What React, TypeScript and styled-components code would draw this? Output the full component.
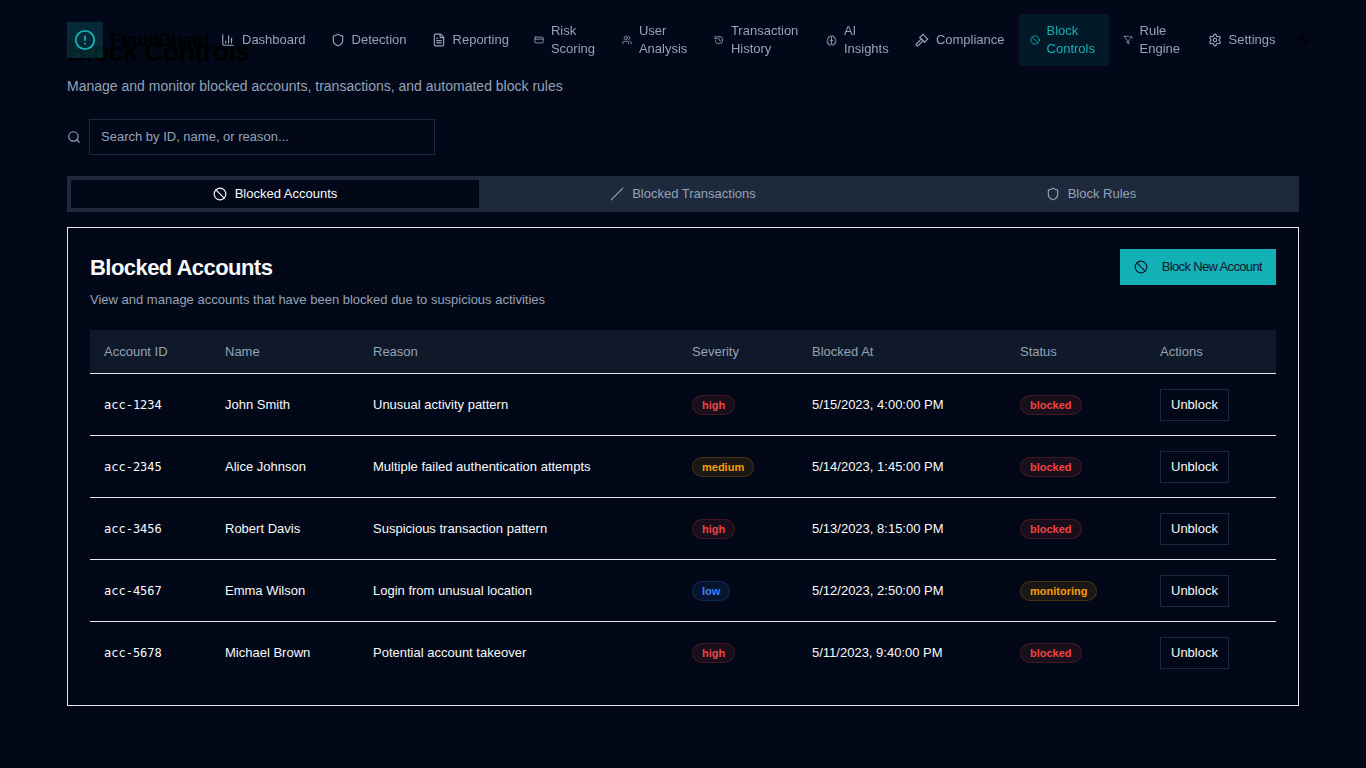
import React from "react";
import styled, { createGlobalStyle, css } from "styled-components";
import {
  Ban,
  Brain,
  ChartColumn,
  CircleAlert,
  CreditCard,
  FileText,
  Gavel,
  History,
  Moon,
  Search,
  Settings,
  Shield,
  Slash,
  Users,
} from "lucide-react";

const color = {
  bg: "#020817",
  text: "#f8fafc",
  muted: "#94a3b8",
  panel: "#1e293b",
  line: "#e5e7eb",
  primary: "#14b0b8",
};

const GlobalStyle = createGlobalStyle`
  *, *::before, *::after { box-sizing: border-box; }
  body {
    margin: 0;
    background: ${color.bg};
    color: ${color.text};
    font-family: "Liberation Sans", Arial, sans-serif;
    font-size: 13px;
    line-height: 18px;
  }
  h1, h2, p { margin: 0; }
  button, input { font: inherit; }
  svg { display: block; flex-shrink: 0; }
`;

const Page = styled.div`
  min-height: 100vh;
`;

const Header = styled.header`
  position: fixed;
  inset: 0 0 auto 0;
  z-index: 10;
  padding: 14px 46px 14px 67px;
  will-change: transform;
`;

const Bar = styled.div`
  display: flex;
  align-items: center;
`;

const Brand = styled.a`
  display: flex;
  align-items: center;
  gap: 7px;
  width: 143px;
  color: #000;
  font-size: 18px;
  line-height: 26px;
  font-weight: 700;
  letter-spacing: -0.025em;
  text-decoration: none;
`;

const BrandMark = styled.span`
  display: grid;
  place-items: center;
  width: 36px;
  height: 36px;
  flex-shrink: 0;
  color: ${color.primary};
  background: rgba(20, 176, 184, 0.2);
`;

const Nav = styled.nav`
  display: flex;
  align-items: center;
  gap: 3px;
`;

const NavLink = styled.a<{ $active?: boolean }>`
  display: flex;
  align-items: center;
  gap: 7px;
  padding: 8px 11px;
  color: ${(p) => (p.$active ? color.primary : color.muted)};
  background: ${(p) => (p.$active ? "rgba(20, 176, 184, 0.1)" : "transparent")};
  text-decoration: none;
`;

const NavLabel = styled.span<{ $width?: number }>`
  width: ${(p) => (p.$width ? `${p.$width}px` : "auto")};
`;

const ThemeButton = styled.button`
  display: grid;
  place-items: center;
  width: 32px;
  height: 36px;
  padding: 0;
  border: 0;
  background: transparent;
  color: #000;
`;

const Main = styled.main`
  padding: 34px 67px 62px;
`;

const Title = styled.h1`
  color: #000;
  font-size: 27px;
  line-height: 36px;
  font-weight: 700;
  letter-spacing: -0.025em;
`;

const Subtitle = styled.p`
  margin-top: 5px;
  color: ${color.muted};
  font-size: 14px;
  line-height: 22px;
`;

const SearchRow = styled.label`
  display: flex;
  align-items: center;
  gap: 8px;
  margin-top: 22px;
  color: ${color.muted};
`;

const SearchInput = styled.input`
  width: 346px;
  height: 36px;
  padding: 0 11px 2px;
  border: 1px solid ${color.panel};
  border-radius: 0;
  outline: 0;
  background: ${color.bg};
  color: ${color.text};
  &::placeholder { color: ${color.muted}; opacity: 1; }
`;

const TabList = styled.div`
  display: grid;
  grid-template-columns: repeat(3, 1fr);
  height: 36px;
  margin-top: 21px;
  padding: 4px;
  background: ${color.panel};
`;

const Tab = styled.button`
  display: flex;
  align-items: center;
  justify-content: center;
  gap: 8px;
  padding: 0;
  border: 0;
  background: transparent;
  color: ${color.muted};
  &[aria-selected="true"] {
    background: ${color.bg};
    color: ${color.text};
  }
`;

const Card = styled.section`
  margin-top: 15px;
  padding: 21px 22px;
  border: 1px solid ${color.line};
`;

const CardHeader = styled.div`
  display: flex;
  align-items: flex-start;
  justify-content: space-between;
  margin-bottom: 21px;
`;

const CardTitle = styled.h2`
  margin: 8px 0 12px;
  font-size: 22px;
  line-height: 22px;
  font-weight: 700;
  letter-spacing: -0.025em;
`;

const CardText = styled.p`
  color: ${color.muted};
`;

const PrimaryButton = styled.button`
  display: flex;
  align-items: center;
  gap: 14px;
  height: 36px;
  padding: 0 14px;
  border: 0;
  background: ${color.primary};
  color: #0f172a;
  letter-spacing: -0.05em;
`;

const Table = styled.table`
  width: 100%;
  table-layout: fixed;
  border-collapse: separate;
  border-spacing: 0;
`;

const HeadCell = styled.th`
  height: 44px;
  padding: 0 14px;
  border-bottom: 1px solid ${color.line};
  background: rgba(30, 41, 59, 0.5);
  color: ${color.muted};
  font-weight: 400;
  text-align: left;
`;

const Cell = styled.td<{ $mono?: boolean }>`
  height: 62px;
  padding: 0 14px;
  border-bottom: 1px solid ${color.line};
  tr:last-child > & { border-bottom-color: transparent; }
  ${(p) =>
    p.$mono &&
    css`
      font-family: "DejaVu Sans Mono", monospace;
      font-size: 12px;
    `}
`;

type Tone = "red" | "amber" | "blue";

const tones = {
  red: ["#ef4444", "rgba(239, 68, 68, 0.1)", "rgba(239, 68, 68, 0.2)"],
  amber: ["#f59e0b", "rgba(245, 158, 11, 0.1)", "rgba(245, 158, 11, 0.2)"],
  blue: ["#3b82f6", "rgba(59, 130, 246, 0.1)", "rgba(59, 130, 246, 0.2)"],
};

const Badge = styled.span<{ $tone: Tone }>`
  display: inline-flex;
  align-items: center;
  height: 20px;
  padding: 0 9px;
  border: 1px solid ${(p) => tones[p.$tone][2]};
  border-radius: 10px;
  background: ${(p) => tones[p.$tone][1]};
  color: ${(p) => tones[p.$tone][0]};
  font-size: 11px;
  line-height: 14px;
  font-weight: 700;
  vertical-align: middle;
`;

const OutlineButton = styled.button`
  height: 32px;
  padding: 0 10px;
  border: 1px solid ${color.panel};
  background: ${color.bg};
  color: ${color.text};
`;

/* Funnel with a small cross at its upper right. */
const FunnelX = ({ size }: { size: number }) => (
  <svg width={size} height={size} viewBox="0 0 24 24" fill="none" stroke="currentColor" strokeWidth={2} strokeLinecap="round" strokeLinejoin="round" aria-hidden="true">
    <path d="M13.013 3H2l8 9.46V19l4 2v-8.54l.9-1.055" />
    <path d="m22 3-5 5" />
    <path d="m17 3 5 5" />
  </svg>
);

const navItems = [
  { label: "Dashboard", Icon: ChartColumn, size: 14 },
  { label: "Detection", Icon: Shield, size: 14 },
  { label: "Reporting", Icon: FileText, size: 14 },
  { label: "Risk Scoring", Icon: CreditCard, size: 10, width: 46 },
  { label: "User Analysis", Icon: Users, size: 10, width: 50 },
  { label: "Transaction History", Icon: History, size: 10, width: 70 },
  { label: "AI Insights", Icon: Brain, size: 11, width: 46 },
  { label: "Compliance", Icon: Gavel, size: 14 },
  { label: "Block Controls", Icon: Ban, size: 10, width: 51, active: true },
  { label: "Rule Engine", Icon: FunnelX, size: 10, width: 43 },
  { label: "Settings", Icon: Settings, size: 14 },
];

const columns = [
  { label: "Account ID", width: 121 },
  { label: "Name", width: 148 },
  { label: "Reason", width: 319 },
  { label: "Severity", width: 120 },
  { label: "Blocked At", width: 208 },
  { label: "Status", width: 140 },
  { label: "Actions", width: 130 },
];

const accounts = [
  { id: "acc-1234", name: "John Smith", reason: "Unusual activity pattern", severity: "high", at: "5/15/2023, 4:00:00 PM", status: "blocked" },
  { id: "acc-2345", name: "Alice Johnson", reason: "Multiple failed authentication attempts", severity: "medium", at: "5/14/2023, 1:45:00 PM", status: "blocked" },
  { id: "acc-3456", name: "Robert Davis", reason: "Suspicious transaction pattern", severity: "high", at: "5/13/2023, 8:15:00 PM", status: "blocked" },
  { id: "acc-4567", name: "Emma Wilson", reason: "Login from unusual location", severity: "low", at: "5/12/2023, 2:50:00 PM", status: "monitoring" },
  { id: "acc-5678", name: "Michael Brown", reason: "Potential account takeover", severity: "high", at: "5/11/2023, 9:40:00 PM", status: "blocked" },
];

const toneOf: Record<string, Tone> = {
  high: "red",
  medium: "amber",
  low: "blue",
  blocked: "red",
  monitoring: "amber",
};

const ColumnWidth = styled.col<{ $width: number }>`
  width: ${(p) => p.$width}px;
`;

export default function App() {
  return (
    <Page>
      <GlobalStyle />
      <Header>
        <Bar>
          <Brand href="#">
            <BrandMark>
              <CircleAlert size={22} />
            </BrandMark>
            FraudGuard
          </Brand>
          <Nav aria-label="Main">
            {navItems.map(({ label, Icon, size, width, active }) => (
              <NavLink key={label} href="#" $active={active} aria-current={active ? "page" : undefined}>
                <Icon size={size} />
                <NavLabel $width={width}>{label}</NavLabel>
              </NavLink>
            ))}
          </Nav>
          <ThemeButton type="button" aria-label="Toggle theme">
            <Moon size={14} />
          </ThemeButton>
        </Bar>
      </Header>
      <Main>
        <Title>Block Controls</Title>
        <Subtitle>Manage and monitor blocked accounts, transactions, and automated block rules</Subtitle>
        <SearchRow>
          <Search size={14} />
          <SearchInput type="text" placeholder="Search by ID, name, or reason..." aria-label="Search blocks" />
        </SearchRow>
        <TabList role="tablist">
          <Tab type="button" role="tab" aria-selected="true">
            <Ban size={14} />
            Blocked Accounts
          </Tab>
          <Tab type="button" role="tab" aria-selected="false">
            <Slash size={14} />
            Blocked Transactions
          </Tab>
          <Tab type="button" role="tab" aria-selected="false">
            <Shield size={14} />
            Block Rules
          </Tab>
        </TabList>
        <Card>
          <CardHeader>
            <div>
              <CardTitle>Blocked Accounts</CardTitle>
              <CardText>View and manage accounts that have been blocked due to suspicious activities</CardText>
            </div>
            <PrimaryButton type="button">
              <Ban size={14} />
              Block New Account
            </PrimaryButton>
          </CardHeader>
          <Table>
            <colgroup>
              {columns.map((c) => (
                <ColumnWidth key={c.label} $width={c.width} />
              ))}
            </colgroup>
            <thead>
              <tr>
                {columns.map((c) => (
                  <HeadCell key={c.label} scope="col">{c.label}</HeadCell>
                ))}
              </tr>
            </thead>
            <tbody>
              {accounts.map((a) => (
                <tr key={a.id}>
                  <Cell $mono>{a.id}</Cell>
                  <Cell>{a.name}</Cell>
                  <Cell>{a.reason}</Cell>
                  <Cell>
                    <Badge $tone={toneOf[a.severity]}>{a.severity}</Badge>
                  </Cell>
                  <Cell>{a.at}</Cell>
                  <Cell>
                    <Badge $tone={toneOf[a.status]}>{a.status}</Badge>
                  </Cell>
                  <Cell>
                    <OutlineButton type="button">Unblock</OutlineButton>
                  </Cell>
                </tr>
              ))}
            </tbody>
          </Table>
        </Card>
      </Main>
    </Page>
  );
}
